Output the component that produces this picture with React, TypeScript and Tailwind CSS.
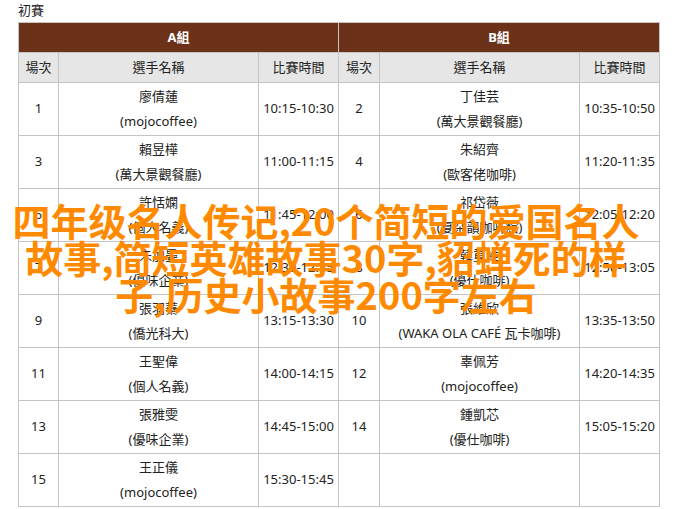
const rows: [string, string, string, string, string, string, string, string][] = [
  ["1", "廖倩蓮", "(mojocoffee)", "10:15-10:30", "2", "丁佳芸", "(萬大景觀餐廳)", "10:35-10:50"],
  ["3", "賴昱樺", "(萬大景觀餐廳)", "11:00-11:15", "4", "朱紹齊", "(歐客佬咖啡)", "11:20-11:35"],
  ["5", "許恬嫻", "(個人名義)", "11:45-12:00", "6", "祁岱薇", "(夏朵韻咖啡館)", "12:05-12:20"],
  ["7", "朱加晏", "(優味企業)", "12:30-12:45", "8", "韓重維", "(優仕咖啡)", "12:50-13:05"],
  ["9", "張羽蓁", "(僑光科大)", "13:15-13:30", "10", "張維欣", "(WAKA OLA CAFÉ 瓦卡咖啡)", "13:35-13:50"],
  ["11", "王聖偉", "(個人名義)", "14:00-14:15", "12", "辜佩芳", "(mojocoffee)", "14:20-14:35"],
  ["13", "張雅雯", "(優味企業)", "14:45-15:00", "14", "鍾凱芯", "(優仕咖啡)", "15:05-15:20"],
  ["15", "王正儀", "(mojocoffee)", "15:30-15:45", "", "", "", ""],
];

const cell = "border border-[#c4c4c4] text-center align-middle p-0";

export default function App() {
  return (
    <div
      className="relative w-[694px] h-[509px] bg-white overflow-hidden text-[#222] text-[13px]"
      style={{ fontFamily: '"Noto Sans", "Noto Sans CJK TC", sans-serif' }}
    >
      <div className="pl-[18px] h-[22px] leading-[20px] text-[13px] text-[#222]">初賽</div>
      <table className="ml-[18px] border-collapse table-fixed w-[641px]">
        <colgroup>
          <col className="w-[40px]" />
          <col className="w-[200px]" />
          <col className="w-[80px]" />
          <col className="w-[41px]" />
          <col className="w-[200px]" />
          <col className="w-[80px]" />
        </colgroup>
        <thead>
          <tr className="h-[30px] bg-[#6b3219] text-white font-bold">
            <th colSpan={3} className={cell + " border-[#b0b0b0]"}>A組</th>
            <th colSpan={3} className={cell + " border-[#b0b0b0]"}>B組</th>
          </tr>
          <tr className="h-[30px] bg-[#e6e6e6] font-normal">
            <th className={cell + " font-normal"}>場次</th>
            <th className={cell + " font-normal"}>選手名稱</th>
            <th className={cell + " font-normal"}>比賽時間</th>
            <th className={cell + " font-normal"}>場次</th>
            <th className={cell + " font-normal"}>選手名稱</th>
            <th className={cell + " font-normal"}>比賽時間</th>
          </tr>
        </thead>
        <tbody>
          {rows.map((r, i) => (
            <tr key={i} className="h-[53px]">
              <td className={cell}>{r[0]}</td>
              <td className={cell + " leading-[25px]"}>
                <div>{r[1]}</div>
                <div>{r[2]}</div>
              </td>
              <td className={cell}>{r[3]}</td>
              <td className={cell}>{r[4]}</td>
              <td className={cell + " leading-[25px]"}>
                {r[5] && <div>{r[5]}</div>}
                {r[6] && <div>{r[6]}</div>}
              </td>
              <td className={cell}>{r[7]}</td>
            </tr>
          ))}
        </tbody>
      </table>

      {/* overlay headline */}
      <div
        className="absolute left-[0px] top-[201px] w-[652px] text-center text-[38px] leading-[37px] font-bold text-[#ff8a00]"
        style={{ fontFamily: '"Noto Sans CJK SC", sans-serif' }}
      >
        四年级名人传记,20个简短的爱国名人<br />
        故事,简短英雄故事30字,貂蝉死的样<br />
        子,历史小故事200字左右
      </div>
    </div>
  );
}
